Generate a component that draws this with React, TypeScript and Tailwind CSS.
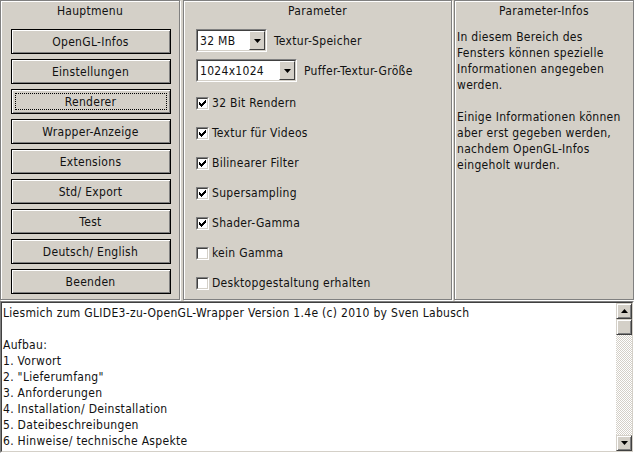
import { Fragment } from 'react';

const font = { fontFamily: '"DejaVu Sans Condensed", "DejaVu Sans", sans-serif' };

const menu = [
  'OpenGL-Infos',
  'Einstellungen',
  'Renderer',
  'Wrapper-Anzeige',
  'Extensions',
  'Std/ Export',
  'Test',
  'Deutsch/ English',
  'Beenden',
];

const options = [
  { label: '32 Bit Rendern', checked: true },
  { label: 'Textur für Videos', checked: true },
  { label: 'Bilinearer Filter', checked: true },
  { label: 'Supersampling', checked: true },
  { label: 'Shader-Gamma', checked: true },
  { label: 'kein Gamma', checked: false },
  { label: 'Desktopgestaltung erhalten', checked: false },
];

const readme = [
  'Liesmich zum GLIDE3-zu-OpenGL-Wrapper Version 1.4e (c) 2010 by Sven Labusch',
  '',
  'Aufbau:',
  '1. Vorwort',
  '2. "Lieferumfang"',
  '3. Anforderungen',
  '4. Installation/ Deinstallation',
  '5. Dateibeschreibungen',
  '6. Hinweise/ technische Aspekte',
];

// etched group frame like the old win32 panels
const panel =
  'h-[300px] border border-[#808080] shadow-[inset_1px_1px_0_#fff,1px_1px_0_#fff]';

const Combo = ({ value, width }: { value: string; width: string }) => (
  <div
    className={`${width} h-[23px] flex bg-white border border-t-[#808080] border-l-[#808080] border-b-white border-r-white`}
  >
    <div className="flex-1 flex items-center border border-t-[#404040] border-l-[#404040] border-b-[#d4d0c8] border-r-[#d4d0c8] pl-[2px] leading-none">
      <span>{value}</span>
      <div className="ml-auto mr-0 h-full w-[16px] flex items-center justify-center bg-[#d4d0c8] border border-t-white border-l-white border-b-[#404040] border-r-[#404040]">
        <svg width="7" height="4" viewBox="0 0 7 4">
          <path d="M0 0h7L3.5 4z" fill="#000" />
        </svg>
      </div>
    </div>
  </div>
);

const Check = ({ checked }: { checked: boolean }) => (
  <div className="w-[13px] h-[13px] bg-white border border-t-[#808080] border-l-[#808080] border-b-white border-r-white">
    <div className="w-full h-full border border-t-[#404040] border-l-[#404040] border-b-[#d4d0c8] border-r-[#d4d0c8] flex items-center justify-center">
      {checked && (
        <svg width="7" height="7" viewBox="0 0 7 7">
          <path d="M0 2h1v1h1v1h1V3h1V2h1V1h1V0h1v3H6v1H5v1H4v1H3v1H2V6H1V5H0z" fill="#000" />
        </svg>
      )}
    </div>
  </div>
);

export default function App() {
  return (
    <div
      className="w-[634px] h-[453px] bg-[#d4d0c8] text-[12px] tracking-[0.3px] text-[#111] overflow-hidden flex flex-col"
      style={font}
    >
      <div className="flex h-[301px]">
        {/* Hauptmenu */}
        <div className={`${panel} w-[180px] flex flex-col items-center`}>
          <div className="h-[28px] pt-[2px] leading-[16px]">Hauptmenu</div>
          <div className="flex flex-col gap-[5px] pl-[1px]">
            {menu.map((m) => (
              <button
                key={m}
                className="w-[160px] h-[25px] border border-black bg-[#d4d0c8] shadow-[inset_1px_1px_0_#fff,inset_-1px_-1px_0_#808080] flex items-center justify-center leading-none"
              >
                {m === 'Renderer' ? (
                  <span className="w-[152px] h-[17px] border border-dotted border-black flex items-center justify-center">
                    {m}
                  </span>
                ) : (
                  m
                )}
              </button>
            ))}
          </div>
        </div>

        {/* Parameter */}
        <div className={`${panel} ml-[3px] w-[269px] flex flex-col`}>
          <div className="h-[28px] pt-[2px] leading-[16px] text-center">Parameter</div>
          <div className="pl-[12px] flex flex-col">
            <div className="flex items-center gap-[7px] h-[23px]">
              <Combo value="32 MB" width="w-[71px]" />
              <span>Textur-Speicher</span>
            </div>
            <div className="flex items-center gap-[7px] h-[23px] mt-[7px]">
              <Combo value="1024x1024" width="w-[101px]" />
              <span>Puffer-Textur-Größe</span>
            </div>
            <div className="flex flex-col mt-[6px]">
              {options.map((o) => (
                <div key={o.label} className="flex items-center gap-[3px] h-[30px]">
                  <Check checked={o.checked} />
                  <span>{o.label}</span>
                </div>
              ))}
            </div>
          </div>
        </div>

        {/* Parameter-Infos */}
        <div className={`${panel} ml-[2px] flex-1`}>
          <div className="h-[28px] pt-[2px] leading-[16px] text-center">Parameter-Infos</div>
          <div className="pl-[2px] leading-[16px]">
            <p>
              In diesem Bereich des
              <br />
              Fensters können spezielle
              <br />
              Informationen angegeben
              <br />
              werden.
            </p>
            <p className="mt-[16px]">
              Einige Informationen können
              <br />
              aber erst gegeben werden,
              <br />
              nachdem OpenGL-Infos
              <br />
              eingeholt wurden.
            </p>
          </div>
        </div>
      </div>

      {/* Liesmich */}
      <div className="flex-1 flex border border-t-[#808080] border-l-[#808080] border-b-white border-r-white">
        <div className="flex-1 flex bg-white border border-t-[#404040] border-l-[#404040] border-b-[#d4d0c8] border-r-[#d4d0c8]">
          <div className="flex-1 pl-[1px] pt-[2px] leading-[16px] whitespace-pre">
            {readme.map((l, i) => (
              <Fragment key={i}>
                {l || ' '}
                <br />
              </Fragment>
            ))}
          </div>
          <div className="w-[16px] flex flex-col bg-[repeating-conic-gradient(#d4d0c8_0_25%,#fff_0_50%)] bg-[length:2px_2px]">
            <div className="h-[16px] flex items-center justify-center bg-[#d4d0c8] border border-t-[#d4d0c8] border-l-[#d4d0c8] border-b-[#404040] border-r-[#404040] shadow-[inset_1px_1px_0_#fff,inset_-1px_-1px_0_#808080]">
              <svg width="7" height="4" viewBox="0 0 7 4">
                <path d="M3.5 0L7 4H0z" fill="#000" />
              </svg>
            </div>
            <div className="h-[16px] bg-[#d4d0c8] border border-t-[#d4d0c8] border-l-[#d4d0c8] border-b-[#404040] border-r-[#404040] shadow-[inset_1px_1px_0_#fff,inset_-1px_-1px_0_#808080]" />
            <div className="flex-1" />
            <div className="h-[16px] flex items-center justify-center bg-[#d4d0c8] border border-t-[#d4d0c8] border-l-[#d4d0c8] border-b-[#404040] border-r-[#404040] shadow-[inset_1px_1px_0_#fff,inset_-1px_-1px_0_#808080]">
              <svg width="7" height="4" viewBox="0 0 7 4">
                <path d="M0 0h7L3.5 4z" fill="#000" />
              </svg>
            </div>
          </div>
        </div>
      </div>
    </div>
  );
}
